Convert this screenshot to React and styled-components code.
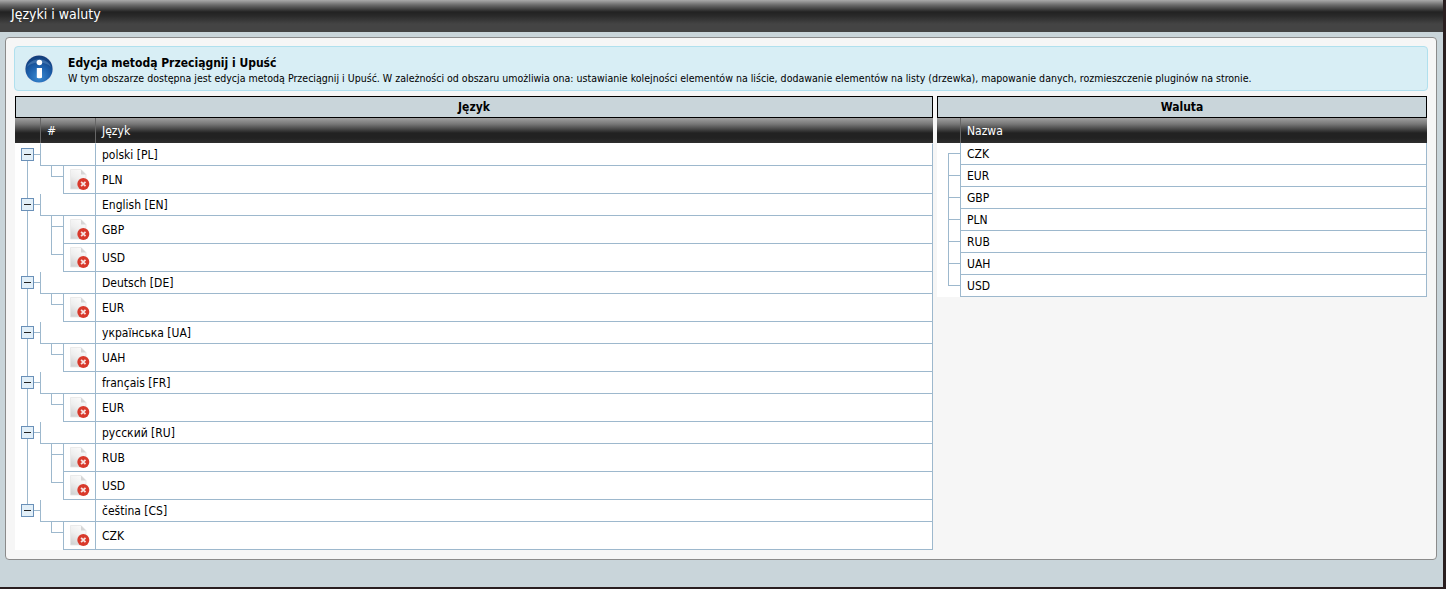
import React from 'react'
import styled, { createGlobalStyle } from 'styled-components'

const LINE = '#9db8cd'
const FONT = '"DejaVu Sans Condensed", "DejaVu Sans", "Liberation Sans", sans-serif'

const Global = createGlobalStyle`
  html, body {
    margin: 0;
    padding: 0;
    height: 100%;
    background: #2a1f20;
    overflow: hidden;
  }
  * { box-sizing: border-box; }
`

////////Styles///////////
const Page = styled.div`
  width: 1443px;
  height: 587px;
  background: #c9d5da;
  font-family: ${FONT};
  font-stretch: condensed;
  font-size: 12px;
  color: #000;
  display: flex;
  flex-direction: column;
`
const TitleBar = styled.header`
  height: 32px;
  padding: 5px 0 0 11px;
  font-size: 14px;
  line-height: 18px;
  color: #fff;
  background: linear-gradient(#aaaaaa 0, #6a6a6a 5px, #222 12px, #2a2a2a 16px, #444 24px, #444 32px);
`
const Panel = styled.main`
  width: 1432px;
  height: 523px;
  margin: 5px 0 0 5px;
  padding: 8px 8px 0 8px;
  background: #f6f6f6;
  border: 1px solid #8b8b8b;
  border-radius: 4px;
`
const InfoBox = styled.section`
  height: 45px;
  display: flex;
  align-items: center;
  gap: 14px;
  padding-left: 9px;
  background: #d8eef5;
  border: 1px solid #b0e0ee;
  border-radius: 4px;
`
const InfoBody = styled.div`
  margin-top: 3px;
`
const InfoTitle = styled.div`
  font-weight: bold;
  font-size: 12px;
  line-height: 16px;
`
const InfoText = styled.div`
  font-size: 10.54px;
  line-height: 14px;
`
const Tables = styled.div`
  display: flex;
  gap: 4px;
  margin: 5px 1px 0;
`
const Table = styled.div`
  width: ${({ $width }) => $width}px;
`
const TableTitle = styled.div`
  height: 22px;
  border: 1px solid #000;
  background: #c9d5da;
  font-weight: bold;
  font-size: 12px;
  line-height: 21px;
  text-align: center;
`
const HeadRow = styled.div`
  height: 25px;
  display: flex;
  color: #fff;
  background: linear-gradient(#a0a0a0 0, #777 6px, #222 15px, #222 20px, #2e2e2e 25px);
`
const HeadCell = styled.div`
  width: ${({ $width }) => ($width ? `${$width}px` : 'auto')};
  flex: ${({ $width }) => ($width ? 'none' : 1)};
  padding: 6px 0 0 6px;
  line-height: 15px;
  border-left: ${({ $plain }) => ($plain ? 'none' : '1px solid #666')};
`
const Row = styled.div`
  display: flex;
  height: ${({ $parent }) => ($parent ? 23 : 28)}px;
  margin-top: ${({ $overlap }) => ($overlap ? -1 : 0)}px;
`
const Tree = styled.div`
  position: relative;
  background: #fff;
  flex: none;
  width: ${({ $width }) => $width}px;
`
const Spine = styled.span`
  position: absolute;
  left: 12px;
  width: 1px;
  top: ${({ $top }) => $top}px;
  bottom: ${({ $bottom }) => $bottom}px;
  background: ${LINE};
`
const Stem = styled.span`
  position: absolute;
  left: 36px;
  top: 0;
  width: 12px;
  height: 11px;
  border-left: 1px solid ${LINE};
  border-bottom: 1px solid ${LINE};
`
const StemDown = styled.span`
  position: absolute;
  left: 36px;
  top: 0;
  bottom: 0;
  width: 1px;
  background: ${LINE};
`
const Expander = styled.span`
  position: absolute;
  left: 6px;
  top: 5px;
  width: 13px;
  height: 13px;
  background: #e2eff8;
  border: 1px solid #6a90b8;
  display: flex;
  align-items: center;
  justify-content: center;
  &::before {
    content: '';
    width: 7px;
    height: 1px;
    background: #222;
  }
  &::after {
    content: '';
    position: absolute;
    left: 12px;
    top: 5px;
    width: 6px;
    height: 1px;
    background: ${LINE};
  }
`
const IdCell = styled.div`
  flex: none;
  width: ${({ $width }) => $width}px;
  background: #fff;
  border-left: 1px solid ${LINE};
  border-bottom: 1px solid ${LINE};
  border-top: ${({ $top }) => ($top ? `1px solid ${$top}` : 'none')};
  padding-left: 6px;
`
const NameCell = styled.div`
  flex: 1;
  background: #fff;
  border-left: 1px solid ${LINE};
  border-right: 1px solid ${LINE};
  border-bottom: 1px solid ${LINE};
  border-top: ${({ $top }) => ($top ? `1px solid ${$top}` : 'none')};
  padding-left: 6px;
  display: flex;
  align-items: center;
`
const FlatRow = styled.div`
  display: flex;
  height: 22px;
`
const FlatTree = styled.div`
  position: relative;
  flex: none;
  width: 23px;
  background: #fff;
  &::before {
    content: '';
    position: absolute;
    left: 11px;
    top: ${({ $first }) => ($first ? '10px' : '0')};
    bottom: ${({ $last }) => ($last ? '11px' : '0')};
    width: 1px;
    background: ${LINE};
  }
  &::after {
    content: '';
    position: absolute;
    left: 11px;
    right: 0;
    top: 10px;
    height: 1px;
    background: ${LINE};
  }
`
const IconSvg = styled.svg`
  display: block;
`

const InfoIcon = () => (
  <IconSvg width="30" height="30" viewBox="0 0 30 30">
    <defs>
      <radialGradient id="infoBg" cx="50%" cy="80%" r="75%">
        <stop offset="0" stopColor="#3a8ad2" />
        <stop offset="0.55" stopColor="#1c5fab" />
        <stop offset="1" stopColor="#123e7c" />
      </radialGradient>
    </defs>
    <circle cx="15" cy="15" r="14.5" fill="#dfe8f0" />
    <circle cx="15" cy="15" r="13.6" fill="url(#infoBg)" />
    <path d="M3 13C8 7 22 7 27 13C24 3 6 3 3 13Z" fill="#5f8fc4" opacity="0.5" />
    <circle cx="15.4" cy="8.5" r="2.8" fill="#fff" />
    <path d="M12.8 14h5.200v9.600c0 1 -5.200 1 -5.200 0Z" fill="#fff" />
  </IconSvg>
)

const DeleteIcon = () => (
  <IconSvg width="24" height="27" viewBox="0 0 24 27">
    <defs>
      <linearGradient id="pageBg" x1="0.7" y1="0" x2="0.2" y2="1">
        <stop offset="0" stopColor="#fbfbfb" />
        <stop offset="0.5" stopColor="#eeeeee" />
        <stop offset="1" stopColor="#d2d2d2" />
      </linearGradient>
    </defs>
    <path d="M0.500 3.500h10.500l5 5v14.500h-15.500Z" fill="url(#pageBg)" stroke="#e6e6e6" strokeWidth="0.800" />
    <path d="M11 3.500v5h5Z" fill="#d6d6d6" />
    <circle cx="13.300" cy="18" r="6" fill="#d8392b" />
    <path d="M11.100 15.800l4.400 4.400M15.500 15.800l-4.400 4.400" stroke="#f6e4e2" strokeWidth="1.800" />
  </IconSvg>
)

const languages = [
  { name: 'polski [PL]', currencies: ['PLN'] },
  { name: 'English [EN]', currencies: ['GBP', 'USD'] },
  { name: 'Deutsch [DE]', currencies: ['EUR'] },
  { name: 'українська [UA]', currencies: ['UAH'] },
  { name: 'français [FR]', currencies: ['EUR'] },
  { name: 'русский [RU]', currencies: ['RUB', 'USD'] },
  { name: 'čeština [CS]', currencies: ['CZK'] },
]
const currencies = ['CZK', 'EUR', 'GBP', 'PLN', 'RUB', 'UAH', 'USD']

const App = () => {
  return (
    <Page>
      <Global />
      <TitleBar>Języki i waluty</TitleBar>
      <Panel>
        <InfoBox>
          <InfoIcon />
          <InfoBody>
            <InfoTitle>Edycja metodą Przeciągnij i Upuść</InfoTitle>
            <InfoText>
              W tym obszarze dostępna jest edycja metodą Przeciągnij i Upuść. W zależności od obszaru umożliwia ona: ustawianie kolejności elementów na liście, dodawanie elementów na listy (drzewka), mapowanie danych, rozmieszczenie pluginów na stronie.
            </InfoText>
          </InfoBody>
        </InfoBox>
        <Tables>
          <Table $width={918}>
            <TableTitle>Język</TableTitle>
            <HeadRow>
              <HeadCell $width={25} $plain />
              <HeadCell $width={55}>#</HeadCell>
              <HeadCell>Język</HeadCell>
            </HeadRow>
            {languages.map((lang, i) => (
              <React.Fragment key={lang.name}>
                <Row $parent $overlap={i > 0}>
                  <Tree $width={25}>
                    {i > 0 && <Spine $top={0} $bottom={18} />}
                    {i < languages.length - 1 && <Spine $top={18} $bottom={0} />}
                    <Expander />
                  </Tree>
                  <IdCell $width={55} $top={i > 0 ? LINE : '#fff'} />
                  <NameCell $top={i > 0 ? LINE : '#fff'}>{lang.name}</NameCell>
                </Row>
                {lang.currencies.map((code, j) => (
                  <Row key={code}>
                    <Tree $width={48}>
                      {i < languages.length - 1 && <Spine $top={0} $bottom={0} />}
                      {j < lang.currencies.length - 1 && <StemDown />}
                      <Stem />
                    </Tree>
                    <IdCell $width={32}>
                      <DeleteIcon />
                    </IdCell>
                    <NameCell>{code}</NameCell>
                  </Row>
                ))}
              </React.Fragment>
            ))}
          </Table>
          <Table $width={490}>
            <TableTitle>Waluta</TableTitle>
            <HeadRow>
              <HeadCell $width={23} $plain />
              <HeadCell>Nazwa</HeadCell>
            </HeadRow>
            {currencies.map((code, i) => (
              <FlatRow key={code}>
                <FlatTree $first={i === 0} $last={i === currencies.length - 1} />
                <NameCell>{code}</NameCell>
              </FlatRow>
            ))}
          </Table>
        </Tables>
      </Panel>
    </Page>
  )
}

export default App
